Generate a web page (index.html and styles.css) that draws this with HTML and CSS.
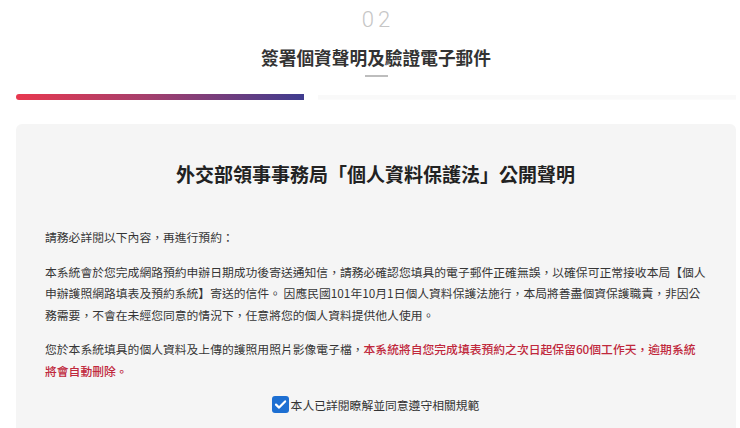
FILE: index.html
```html
<!DOCTYPE html>
<html lang="zh-Hant">
<head>
<meta charset="utf-8">
<title>簽署個資聲明及驗證電子郵件</title>
<link rel="stylesheet" href="styles.css">
</head>
<body>
<div class="page">
  <header class="step-head">
    <div class="step-num">02</div>
    <h1 class="step-title">簽署個資聲明及驗證電子郵件</h1>
    <div class="step-dash"></div>
  </header>
  <div class="progress">
    <div class="progress-fill"></div>
    <div class="progress-track"></div>
  </div>
  <section class="card">
    <h2 class="card-title">外交部領事事務局「個人資料保護法」公開聲明</h2>
    <p class="para">請務必詳閱以下內容，再進行預約：</p>
    <p class="para">本系統會於您完成網路預約申辦日期成功後寄送通知信，請務必確認您填具的電子郵件正確無誤，以確保可正常接收本局【個人申辦護照網路填表及預約系統】寄送的信件。 因應民國101年10月1日個人資料保護法施行，本局將善盡個資保護職責，非因公務需要，不會在未經您同意的情況下，任意將您的個人資料提供他人使用。</p>
    <p class="para">您於本系統填具的個人資料及上傳的護照用照片影像電子檔，<span class="warn">本系統將自您完成填表預約之次日起保留60個工作天，逾期系統將會自動刪除。</span></p>
    <label class="agree">
      <span class="checkbox"><svg width="17" height="17" viewBox="0 0 17 17"><rect x="0" y="0" width="17" height="17" rx="3" fill="#1d6fd2"/><path d="M4 8.6 L7.1 11.6 L13.1 5.4" fill="none" stroke="#fff" stroke-width="2.2" stroke-linecap="round" stroke-linejoin="round"/></svg></span>
      <span class="agree-text">本人已詳閱瞭解並同意遵守相關規範</span>
    </label>
  </section>
</div>
</body>
</html>
```
FILE: styles.css
```css
html, body {
  margin: 0;
  padding: 0;
  background: #ffffff;
}
body {
  font-family: "Noto Sans CJK TC", "Noto Sans", sans-serif;
  color: #333333;
  overflow: hidden;
}
.page {
  padding: 8px 4px 0 16px;
  display: flex;
  flex-direction: column;
}
.step-head {
  display: flex;
  flex-direction: column;
  align-items: center;
}
.step-num {
  font-family: Roboto, "Liberation Sans", sans-serif;
  font-weight: 300;
  font-size: 22px;
  line-height: 24px;
  letter-spacing: 4px;
  padding-left: 4px;
  color: #c6c6c6;
}
.step-title {
  margin: 11.5px 0 0;
  font-size: 17.7px;
  line-height: 26px;
  font-weight: 700;
  color: #333333;
}
.step-dash {
  margin-top: 5.5px;
  width: 23px;
  height: 2px;
  background: #bdbdbd;
}
.progress {
  margin-top: 17px;
  display: flex;
  align-items: center;
  gap: 14px;
  height: 6px;
}
.progress-fill {
  width: 288px;
  height: 6px;
  border-radius: 3px 0 0 3px;
  background: linear-gradient(90deg, #e8384f 0%, #a53f6c 45%, #3f3c8f 100%);
}
.progress-track {
  flex: 1;
  height: 4px;
  background: #f9f9f9;
  box-shadow: 0 1px 1px rgba(0,0,0,0.02);
}
.card {
  margin-top: 24px;
  background: #f5f5f5;
  border-radius: 6px 6px 0 0;
  padding: 36px 30px 20px 29px;
}
.card-title {
  margin: 0 0 38px;
  text-align: center;
  font-size: 19px;
  line-height: 28px;
  font-weight: 700;
  color: #222222;
}
.para {
  margin: 0 0 13px;
  font-size: 11.8px;
  line-height: 21.5px;
  color: #353535;
}
.warn {
  color: #c0283c;
  font-weight: 500;
}
.agree {
  display: flex;
  justify-content: center;
  align-items: center;
  gap: 2px;
  height: 21.5px;
  font-size: 11.8px;
  color: #333333;
}
.checkbox {
  display: flex;
  width: 17px;
  height: 17px;
}
```
